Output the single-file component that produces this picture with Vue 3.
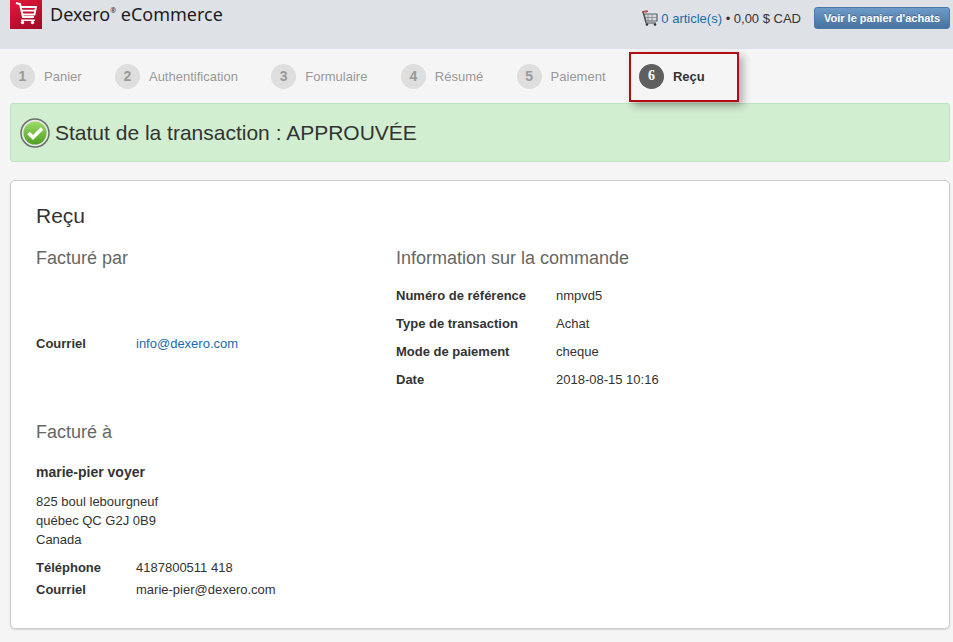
<script setup>
const steps = [
  { n: 1, label: 'Panier' },
  { n: 2, label: 'Authentification' },
  { n: 3, label: 'Formulaire' },
  { n: 4, label: 'Résumé' },
  { n: 5, label: 'Paiement' },
  { n: 6, label: 'Reçu', active: true }
]
const orderRows = [
  ['Numéro de référence', 'nmpvd5'],
  ['Type de transaction', 'Achat'],
  ['Mode de paiement', 'cheque'],
  ['Date', '2018-08-15 10:16']
]
</script>

<template>
  <div class="page">
    <header class="header">
      <div class="brand">
        <div class="logo">
          <svg width="32" height="29" viewBox="0 0 32 29">
            <defs>
              <linearGradient id="lg" x1="0" y1="0" x2="0.6" y2="1">
                <stop offset="0" stop-color="#e8183c" />
                <stop offset="1" stop-color="#a80c28" />
              </linearGradient>
            </defs>
            <rect width="32" height="29" fill="url(#lg)" />
            <path d="M6 3 L10 4 L13 17 L24 17" fill="none" stroke="#fff" stroke-width="2" />
            <path d="M10.5 7 H26 L24.5 14.5 H12.5 M11.5 10.7 H25" fill="none" stroke="#fff" stroke-width="1.8" />
            <rect x="11" y="19.5" width="14" height="1.5" fill="#fff" />
            <circle cx="12.5" cy="22.5" r="1.7" fill="#fff" />
            <circle cx="22.5" cy="22.5" r="1.7" fill="#fff" />
          </svg>
        </div>
        <div class="brand-name">Dexero<sup>®</sup> eCommerce</div>
      </div>
      <div class="cart">
        <svg class="cart-icon" width="17" height="16" viewBox="0 0 17 16">
          <path d="M1 2 H6 L7 1 H4 Z" fill="#c0473f" stroke="#c0473f" />
          <path d="M3 4 H16 V11 H5 Z" fill="#d5dade" stroke="#5d6469" stroke-width="1.2" />
          <path d="M7 4 V11 M11 4 V11 M4 7.5 H16" stroke="#7d8489" stroke-width="0.8" />
          <path d="M2 2 L5 13 H15" fill="none" stroke="#4a4f53" stroke-width="1.2" />
          <circle cx="6" cy="14.5" r="1.3" fill="#333" />
          <circle cx="14" cy="14.5" r="1.3" fill="#333" />
        </svg>
        <span class="cart-text"><a class="link">0 article(s)</a> • 0,00 $ CAD</span>
        <button class="cart-btn">Voir le panier d'achats</button>
      </div>
    </header>

    <main class="main">
      <nav class="steps">
        <div v-for="s in steps" :key="s.n" class="step" :class="{ active: s.active }">
          <span class="num">{{ s.n }}</span>
          <span class="label">{{ s.label }}</span>
        </div>
        <div class="highlight"></div>
      </nav>

      <div class="alert">
        <svg class="alert-icon" width="32" height="32" viewBox="0 0 32 32">
          <defs>
            <linearGradient id="gg" x1="0" y1="0" x2="0" y2="1">
              <stop offset="0" stop-color="#9fdc6a" />
              <stop offset="1" stop-color="#4f9f22" />
            </linearGradient>
          </defs>
          <circle cx="16" cy="16" r="14" fill="#e6eae6" stroke="#6b706b" stroke-width="1.5" />
          <circle cx="16" cy="16" r="11.5" fill="url(#gg)" />
          <path d="M9.5 16 L14 20.5 L23 11.5" fill="none" stroke="#fff" stroke-width="3.6" />
        </svg>
        <span>Statut de la transaction : APPROUVÉE</span>
      </div>

      <section class="card">
        <h2 class="title">Reçu</h2>
        <div class="columns">
          <div class="col-left">
            <h3 class="sub">Facturé par</h3>
            <div class="row seller"><b>Courriel</b><a class="link">info@dexero.com</a></div>
          </div>
          <div class="col-right">
            <h3 class="sub">Information sur la commande</h3>
            <div class="order">
              <div v-for="r in orderRows" :key="r[0]" class="order-row">
                <b>{{ r[0] }}</b><span>{{ r[1] }}</span>
              </div>
            </div>
          </div>
        </div>
        <h3 class="sub billed">Facturé à</h3>
        <div class="client">marie-pier voyer</div>
        <address class="address">825 boul lebourgneuf<br />québec QC G2J 0B9<br />Canada</address>
        <div class="row contact"><b>Téléphone</b><span>4187800511 418</span></div>
        <div class="row contact"><b>Courriel</b><span>marie-pier@dexero.com</span></div>
      </section>
    </main>
  </div>
</template>

<style>
html, body { margin: 0; background: #f5f5f5; }
</style>

<style scoped>
.page {
  width: 953px;
  height: 642px;
  overflow: hidden;
  background: #f5f5f5;
  font-family: "Liberation Sans", Arial, sans-serif;
  font-size: 13px;
  color: #333;
}
.header {
  height: 49px;
  box-sizing: border-box;
  background: #dee2e6;
  padding: 0 3px 0 10px;
  display: flex;
  justify-content: space-between;
  align-items: flex-start;
}
.brand { display: flex; gap: 8px; }
.logo { width: 32px; height: 29px; }
.logo svg { display: block; }
.brand-name {
  font-family: "Noto Sans", sans-serif;
  font-size: 18px;
  line-height: 28px;
  color: #1c1c1c;
}
.brand-name sup { font-size: 7px; line-height: 0; vertical-align: 8px; }
.cart { display: flex; align-items: center; padding-top: 7px; }
.cart-icon { margin-right: 3px; }
.cart-text { margin-right: 13px; color: #333; }
.link { color: #1a6ca8; }
.cart-btn {
  width: 136px;
  height: 22px;
  padding: 0;
  border: 1px solid #4a78a8;
  border-radius: 3px;
  background: linear-gradient(#6f9bc8, #47729f);
  color: #fff;
  font: bold 11px "Liberation Sans", Arial, sans-serif;
  text-shadow: 0 -1px 0 rgba(0, 0, 0, .25);
}
.main { padding: 0 3px 0 10px; }
.steps {
  position: relative;
  height: 54px;
  display: flex;
  align-items: center;
  gap: 33.4px;
}
.step { display: flex; align-items: center; gap: 9px; color: #999; }
.num {
  width: 25px;
  height: 25px;
  border-radius: 50%;
  background: #dedede;
  color: #999;
  font-weight: bold;
  font-size: 14px;
  display: flex;
  align-items: center;
  justify-content: center;
}
.step.active { color: #333; font-weight: bold; }
.step.active .num {
  background: #5f5f5f;
  color: #fff;
  font-family: "Liberation Serif", serif;
}
.highlight {
  position: absolute;
  left: 619px;
  top: 3px;
  width: 106px;
  height: 46px;
  border: 2px solid #b00d14;
  box-shadow: 4px 4px 8px rgba(0, 0, 0, .3);
}
.alert {
  height: 59px;
  box-sizing: border-box;
  display: flex;
  align-items: center;
  gap: 4px;
  padding-left: 8px;
  background: #d1eed1;
  border: 1px solid #bfe3bf;
  border-radius: 3px;
  font-size: 21px;
  color: #333;
}
.alert-icon { margin-top: 1px; }
.card {
  height: 449px;
  box-sizing: border-box;
  margin-top: 18px;
  padding: 23px 25px 0;
  background: #fff;
  border: 1px solid #ccc;
  border-radius: 5px;
  box-shadow: 0 1px 2px rgba(0, 0, 0, .12);
}
.title {
  margin: 0;
  font-size: 21px;
  line-height: 23px;
  font-weight: normal;
  color: #333;
}
.columns { display: flex; margin-top: 21px; }
.col-left { width: 360px; }
.sub {
  margin: 0;
  font-size: 18px;
  line-height: 21px;
  font-weight: normal;
  color: #666;
}
.row { display: flex; line-height: 22px; }
.row b { width: 100px; }
.seller { margin-top: 64px; }
.order { margin-top: 12px; }
.order-row { display: flex; height: 28px; align-items: center; }
.order-row b { width: 160px; }
.billed { margin-top: 29px; }
.client { margin-top: 21px; font-size: 14px; font-weight: bold; line-height: 16px; }
.address { margin-top: 12px; font-style: normal; line-height: 19px; }
.contact { margin-top: 0; }
.address + .contact { margin-top: 8px; }
</style>
